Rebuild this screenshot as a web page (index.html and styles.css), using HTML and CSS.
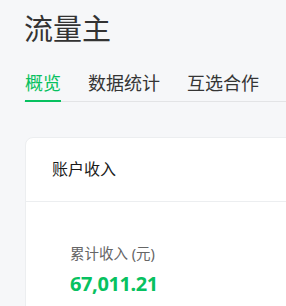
FILE: index.html
```html
<!DOCTYPE html>
<html lang="zh-CN">
<head>
  <meta charset="UTF-8">
  <title>流量主</title>
  <link rel="stylesheet" href="styles.css">
</head>
<body>

  <h1 class="titolo">流量主</h1>

  <div class="tabs">
    <span class="tab attivo">概览</span>
    <span class="tab">数据统计</span>
    <span class="tab">互选合作</span>
  </div>

  <div class="card">
    <div class="card-head">账户收入</div>
    <div class="card-body">
      <div class="etichetta">累计收入 (元)</div>
      <div class="valore">67,011.21</div>
    </div>
  </div>

</body>
</html>
```

FILE: styles.css
```css
html {
  overflow: hidden;
}

body {
  font-family: 'Noto Sans', 'Noto Sans CJK SC', sans-serif;
  background-color: #f6f7f9;
  margin: 0;
  padding: 9px 0 0 24px;
  color: #333;
  width: 900px;
}

.titolo {
  font-size: 29px;
  line-height: 40px;
  font-weight: normal;
  margin: 0;
  color: #333;
}

.tabs {
  display: flex;
  gap: 27px;
  margin-top: 21px;
  border-bottom: 1px solid #e3e4e6;
  padding-left: 1px;
}

.tab {
  font-size: 18px;
  line-height: 26px;
  padding-bottom: 4px;
  margin-bottom: -1px;
  border-bottom: 2px solid transparent;
  color: #353535;
}

.tab.attivo {
  color: #07c160;
  border-bottom-color: #07c160;
}

.card {
  background-color: #ffffff;
  margin: 35px 0 0 1px;
  border: 1px solid #eceef0;
  border-radius: 8px;
}

.card-head {
  font-size: 16px;
  font-weight: normal;
  line-height: 63px;
  padding-left: 26px;
  border-bottom: 1px solid #eceef0;
  color: #1a1a1a;
}

.card-body {
  padding: 41px 0 20px 44px;
}

.etichetta {
  font-size: 14.5px;
  line-height: 20px;
  color: #666;
}

.valore {
  font-size: 20px;
  line-height: 30px;
  margin-top: 6px;
  font-weight: bold;
  color: #07c160;
  letter-spacing: -0.4px;
}
```
